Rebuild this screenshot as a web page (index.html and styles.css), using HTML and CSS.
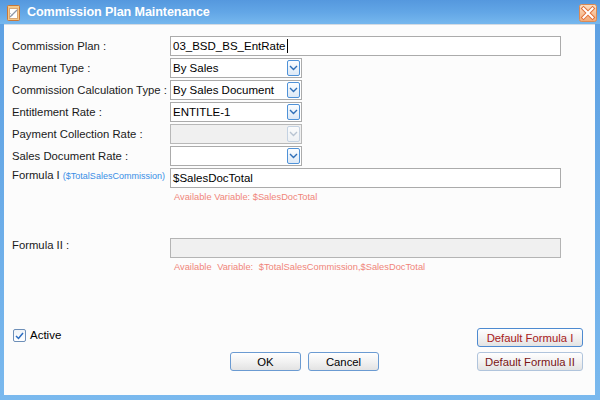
FILE: index.html
```html
<!DOCTYPE html>
<html>
<head>
<meta charset="utf-8">
<link rel="stylesheet" href="styles.css">
</head>
<body>
<div class="window">
  <div class="titlebar">
    <svg class="app-icon" width="14" height="16" viewBox="0 0 14 16">
      <rect x="0.5" y="0.5" width="12" height="15" rx="1" fill="#f6c888" stroke="#c87838"/>
      <rect x="2.5" y="3.5" width="8" height="10" fill="#ffffff" stroke="#d8a878"/>
      <path d="M3 12 L10 5" stroke="#9098a8" stroke-width="1.2"/>
      <path d="M3 8 L6 11" stroke="#b8c0cc" stroke-width="1"/>
    </svg>
    <span class="title">Commission Plan Maintenance</span>
    <span class="close">
      <svg width="18" height="18" viewBox="0 0 18 18">
        <defs>
          <linearGradient id="cg" x1="0" y1="0" x2="0" y2="1">
            <stop offset="0" stop-color="#fde0c4"/>
            <stop offset="1" stop-color="#f3a874"/>
          </linearGradient>
        </defs>
        <rect x="0.5" y="0.5" width="17" height="17" rx="2" fill="url(#cg)" stroke="#d98a55"/>
        <path d="M4.5 4.5 L13.5 13.5 M13.5 4.5 L4.5 13.5" stroke="#e0703a" stroke-width="4" stroke-linecap="square"/>
        <path d="M4.5 4.5 L13.5 13.5 M13.5 4.5 L4.5 13.5" stroke="#ffffff" stroke-width="2" stroke-linecap="square"/>
      </svg>
    </span>
  </div>
  <div class="client">
    <div class="form">
      <div class="row">
        <span class="label">Commission Plan :</span>
        <div class="textbox wide"><span>03_BSD_BS_EntRate</span><span class="caret"></span></div>
      </div>
      <div class="row">
        <span class="label">Payment Type :</span>
        <div class="select"><span class="value">By Sales</span><span class="drop"><svg width="9" height="6" viewBox="0 0 9 6"><path d="M1 1 L4.5 4.5 L8 1" fill="none" stroke="#2f6fb8" stroke-width="1.4"/></svg></span></div>
      </div>
      <div class="row">
        <span class="label">Commission Calculation Type :</span>
        <div class="select"><span class="value">By Sales Document</span><span class="drop"><svg width="9" height="6" viewBox="0 0 9 6"><path d="M1 1 L4.5 4.5 L8 1" fill="none" stroke="#2f6fb8" stroke-width="1.4"/></svg></span></div>
      </div>
      <div class="row">
        <span class="label">Entitlement Rate :</span>
        <div class="select"><span class="value">ENTITLE-1</span><span class="drop"><svg width="9" height="6" viewBox="0 0 9 6"><path d="M1 1 L4.5 4.5 L8 1" fill="none" stroke="#2f6fb8" stroke-width="1.4"/></svg></span></div>
      </div>
      <div class="row">
        <span class="label">Payment Collection Rate :</span>
        <div class="select disabled"><span class="value"></span><span class="drop"><svg width="9" height="6" viewBox="0 0 9 6"><path d="M1 1 L4.5 4.5 L8 1" fill="none" stroke="#b8c4d2" stroke-width="1.4"/></svg></span></div>
      </div>
      <div class="row">
        <span class="label">Sales Document Rate :</span>
        <div class="select"><span class="value"></span><span class="drop"><svg width="9" height="6" viewBox="0 0 9 6"><path d="M1 1 L4.5 4.5 L8 1" fill="none" stroke="#2f6fb8" stroke-width="1.4"/></svg></span></div>
      </div>
      <div class="row formula">
        <span class="label top">Formula I <span class="var">($TotalSalesCommission)</span></span>
        <div class="textbox wide"><span>$SalesDocTotal</span></div>
      </div>
      <div class="hint first">Available Variable: $SalesDocTotal</div>
      <div class="row formula">
        <span class="label top">Formula II :</span>
        <div class="textbox wide disabled"></div>
      </div>
      <div class="hint second">Available Variable: $TotalSalesCommission,$SalesDocTotal</div>
    </div>
    <div class="footer">
      <div class="footer-row">
        <span class="check"><svg width="9" height="8" viewBox="0 0 9 8"><path d="M1 4 L3.5 6.5 L8 1" fill="none" stroke="#2a6cc0" stroke-width="1.5"/></svg></span>
        <span class="check-label">Active</span>
        <span class="btn default-btn focus">Default Formula I</span>
      </div>
      <div class="footer-row second">
        <span class="btn">OK</span>
        <span class="btn">Cancel</span>
        <span class="btn default-btn light">Default Formula II</span>
      </div>
    </div>
  </div>
</div>
</body>
</html>
```
FILE: styles.css
```css
html, body {
  margin: 0;
  padding: 0;
}
body {
  font-family: "Liberation Sans", Arial, sans-serif;
  font-size: 11.3px;
  color: #1a1a1a;
}
.window {
  width: 600px;
  height: 400px;
  display: flex;
  flex-direction: column;
  background: linear-gradient(to bottom, #5c9fe2, #7ab9ee);
  box-sizing: border-box;
}
.titlebar {
  height: 24px;
  flex: none;
  display: flex;
  align-items: center;
  padding-left: 7px;
  background: linear-gradient(to bottom, #5598de 0%, #62a6e6 50%, #76b8ee 100%);
}
.app-icon {
  flex: none;
  margin-right: 6px;
  margin-top: 2px;
}
.title {
  color: #ffffff;
  font-weight: bold;
  font-size: 12.6px;
  letter-spacing: -0.1px;
}
.close {
  margin-left: auto;
  margin-right: 3px;
  margin-top: 1px;
  display: flex;
}
.client {
  flex: 1;
  margin: 0 5px 5px 4px;
  background: #fcfcfc;
  border-top: 1px solid #d4dbe3;
  display: flex;
  flex-direction: column;
}
.form {
  padding: 11px 0 0 8px;
}
.row {
  display: flex;
  align-items: center;
  height: 20px;
  margin-bottom: 2px;
}
.label {
  width: 158px;
  flex: none;
  white-space: nowrap;
}
.label.top {
  align-self: flex-start;
  line-height: 13px;
  padding-top: 1px;
}
.var {
  color: #3a8ee6;
  font-size: 9px;
}
.textbox {
  height: 20px;
  box-sizing: border-box;
  border: 1px solid #ababab;
  background: #ffffff;
  display: flex;
  align-items: center;
  padding-left: 2px;
  color: #000000;
  font-size: 11.5px;
}
.textbox.wide {
  width: 391px;
}
.textbox.disabled {
  background: #f0f0f0;
  border-color: #b4b4b4;
}
.caret {
  width: 1px;
  height: 14px;
  background: #000000;
  margin-left: 1px;
}
.select {
  width: 132px;
  height: 20px;
  box-sizing: border-box;
  border: 1px solid #ababab;
  background: #ffffff;
  display: flex;
  align-items: center;
  padding-left: 2px;
  color: #000000;
  font-size: 11.5px;
}
.select.disabled {
  background: #f0f0f0;
  border-color: #b8b8b8;
}
.select .value {
  flex: 1;
  white-space: nowrap;
}
.drop {
  width: 13px;
  height: 16px;
  box-sizing: border-box;
  margin-right: 1px;
  border: 1px solid #4f92d8;
  border-radius: 2px;
  background: linear-gradient(to bottom, #fbfdff, #dde9f6);
  display: flex;
  align-items: center;
  justify-content: center;
}
.select.disabled .drop {
  border-color: #c4d2e2;
  background: linear-gradient(to bottom, #fafbfc, #eef1f4);
}
.hint {
  margin-left: 162px;
  height: 14px;
  line-height: 14px;
  font-size: 9.3px;
  color: #f0857a;
  white-space: nowrap;
}
.hint.first {
  margin-bottom: 34px;
}
.hint.second {
  word-spacing: 3px;
}
.footer {
  margin-top: auto;
  padding: 0 12px 24px 9px;
}
.footer-row {
  display: flex;
  align-items: center;
  height: 19px;
}
.footer-row.second {
  margin-top: 5px;
  padding-left: 217px;
}
.check {
  width: 13px;
  height: 13px;
  box-sizing: border-box;
  border: 1px solid #6d8fb8;
  border-radius: 2px;
  background: linear-gradient(to bottom, #eef3f8, #ffffff);
  display: flex;
  align-items: center;
  justify-content: center;
  align-self: flex-start;
  margin-top: 1px;
}
.check-label {
  margin-left: 4px;
  font-size: 11.5px;
  color: #000000;
  align-self: flex-start;
  line-height: 15px;
}
.btn {
  width: 71px;
  height: 19px;
  box-sizing: border-box;
  border: 1px solid #6b9bd2;
  border-radius: 3px;
  background: linear-gradient(to bottom, #ffffff 0%, #f2f2f2 50%, #e3e3e3 100%);
  display: flex;
  align-items: center;
  justify-content: center;
  color: #000000;
  margin-right: 7px;
  white-space: nowrap;
}
.default-btn {
  width: 106px;
  margin-left: auto;
  margin-right: 0;
  color: #7a1414;
}
.default-btn.focus {
  border-color: #4d8ad0;
  color: #a82020;
}
.default-btn.light {
  border-color: #b0c4dc;
}
```
